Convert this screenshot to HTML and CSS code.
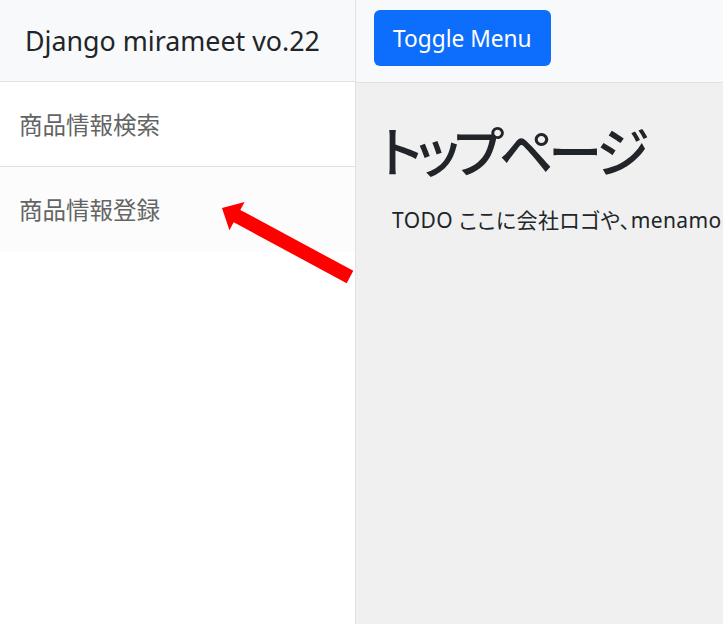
FILE: index.html
```html
<!DOCTYPE html>
<html lang="ja">
<head>
<meta charset="utf-8">
<title>Django mirameet</title>
<link rel="stylesheet" href="styles.css">
</head>
<body>
<div class="wrapper">
  <aside class="sidebar">
    <div class="sidebar-heading">Django mirameet vo.22</div>
    <nav class="list-group">
      <a class="list-item" href="#">商品情報検索</a>
      <a class="list-item list-item-active" href="#">商品情報登録</a>
    </nav>
  </aside>
  <main class="page">
    <header class="navbar">
      <button class="btn-toggle" type="button">Toggle Menu</button>
    </header>
    <div class="content">
      <h1 class="title">トップページ</h1>
      <p class="lead">TODO ここに会社ロゴや、menamoreのお知らせを表示する</p>
    </div>
  </main>
</div>
<svg class="arrow" width="723" height="624" viewBox="0 0 723 624" aria-hidden="true">
  <polygon fill="#ff0000" points="222,208 244.6,202 240.3,209.9 353.3,270.8 346.7,283.2 233.7,222.3 229.4,230.2"/>
</svg>
</body>
</html>
```
FILE: styles.css
```css
html, body {
  margin: 0;
  padding: 0;
  height: 100%;
  overflow: hidden;
}
body {
  font-family: "Noto Sans", "Noto Sans CJK JP", sans-serif;
  color: #212529;
  background: #ffffff;
  position: relative;
}
.wrapper {
  display: flex;
  height: 624px;
}
.sidebar {
  width: 355px;
  flex: 0 0 355px;
  border-right: 1px solid #dee2e6;
  background: #ffffff;
}
.sidebar-heading {
  height: 82px;
  box-sizing: border-box;
  padding: 0 0 0 25px;
  display: flex;
  align-items: center;
  font-size: 26.8px;
  background: #f8f9fa;
  border-bottom: 1px solid #dee2e6;
  white-space: nowrap;
}
.list-group {
  display: flex;
  flex-direction: column;
}
.list-item {
  display: block;
  height: 85px;
  box-sizing: border-box;
  padding: 0 0 0 19px;
  line-height: 84px;
  font-size: 23.5px;
  font-family: "Noto Sans CJK JP", sans-serif;
  color: #636464;
  text-decoration: none;
  background: #ffffff;
  border-bottom: 1px solid #dee2e6;
}
.list-item-active {
  background: #fcfcfc;
  border-bottom: none;
}
.page {
  flex: 1;
  min-width: 0;
  background: #f0f0f0;
  overflow: hidden;
}
.navbar {
  height: 72px;
  background: #f8f9fa;
  border-bottom: 1px solid #dee2e6;
  display: flex;
  align-items: flex-start;
  padding: 10px 0 0 18px;
}
.btn-toggle {
  height: 56px;
  padding: 0 19px;
  background: #0d6efd;
  color: #ffffff;
  border: none;
  border-radius: 6px;
  font-family: "Noto Sans", sans-serif;
  font-size: 22.7px;
}
.content {
  padding: 0 16px;
}
.title {
  margin: 31px 0 0 8px;
  font-family: "Noto Sans CJK JP", sans-serif;
  font-weight: 500;
  font-size: 54px;
  line-height: 72px;
  font-feature-settings: "palt" 1;
  letter-spacing: -5px;
  white-space: nowrap;
}
.lead {
  margin: 16px 0 0 20px;
  font-size: 21px;
  line-height: 36px;
  white-space: nowrap;
  font-feature-settings: "palt" 1;
  letter-spacing: 0.4px;
  font-family: "Noto Sans", "Noto Sans CJK JP", sans-serif;
}
.arrow {
  position: absolute;
  left: 0;
  top: 0;
  pointer-events: none;
}
```
